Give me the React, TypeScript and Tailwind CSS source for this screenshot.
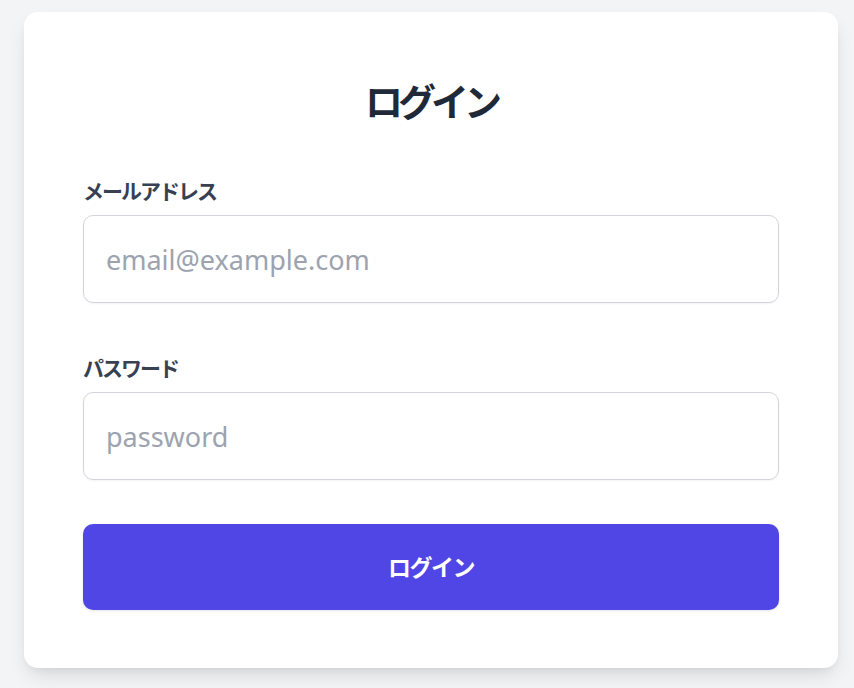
export default function App() {
  return (
    <div
      className="min-h-[688px] bg-[#f3f4f6] pt-[12px] pl-[24px]"
      style={{ fontFamily: '"Noto Sans", "Noto Sans CJK JP", sans-serif' }}
    >
      <div className="w-[814px] rounded-[14px] bg-white px-[59px] pt-[59px] pb-[58px] shadow-[0_10px_20px_-4px_rgba(0,0,0,0.12),0_4px_8px_-4px_rgba(0,0,0,0.08)]">
        <h1 className="text-center text-[38px] font-bold leading-[60px] tracking-[-5px] text-[#1f2937]">ログイン</h1>

        <form className="mt-[45px] flex flex-col">
          <label className="mb-[9px] text-[21px] font-semibold leading-[30px] tracking-[-2px] text-[#374151]">メールアドレス</label>
          <input
            type="email"
            placeholder="email@example.com"
            className="h-[88px] w-full rounded-[10px] border border-[#d1d5db] px-[22px] text-[27px] text-[#1f2937] shadow-[0_1px_2px_rgba(0,0,0,0.05)] outline-none placeholder:text-[#9ca3af]"
          />

          <label className="mt-[50px] mb-[9px] text-[21px] font-semibold leading-[30px] tracking-[-2px] text-[#374151]">パスワード</label>
          <input
            type="password"
            placeholder="password"
            className="h-[88px] w-full rounded-[10px] border border-[#d1d5db] px-[22px] text-[27px] text-[#1f2937] shadow-[0_1px_2px_rgba(0,0,0,0.05)] outline-none placeholder:text-[#9ca3af]"
          />

          <button
            type="button"
            className="mt-[44px] h-[86px] w-full rounded-[10px] bg-[#4f46e5] text-[23px] font-semibold tracking-[-1.5px] text-white shadow-[0_1px_3px_rgba(0,0,0,0.1)]"
          >
            ログイン
          </button>
        </form>
      </div>
    </div>
  );
}
